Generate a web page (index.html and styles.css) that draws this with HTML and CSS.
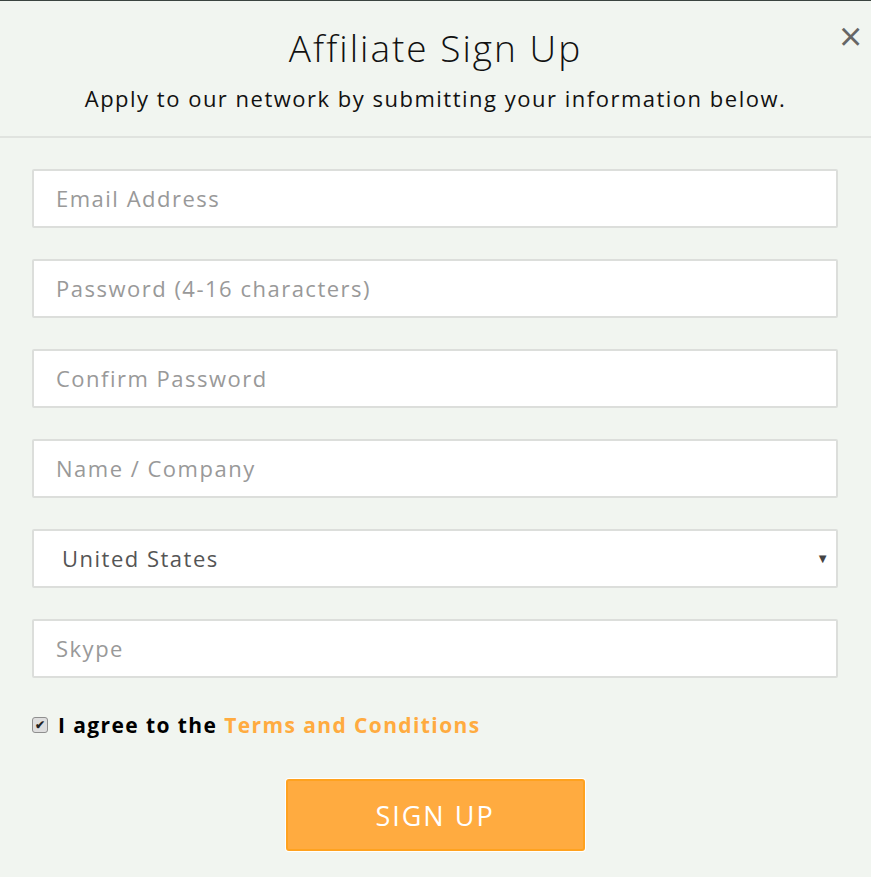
FILE: index.html
```html
<!DOCTYPE html>
<html lang="en">
  <head>
    <title>Affiliate Sign Up</title>
    <meta charset="utf-8" />
    <link rel="stylesheet" href="styles.css">
  </head>
  <body>
    <div class="modal">
      <div class="modal-header">
        <h1>Affiliate Sign Up</h1>
        <p>Apply to our network by submitting your information below.</p>
        <span class="close">&times;</span>
      </div>

      <form class="signup">
        <input class="field" type="email" placeholder="Email Address" />
        <input class="field" type="password" placeholder="Password (4-16 characters)" />
        <input class="field" type="password" placeholder="Confirm Password" />
        <input class="field" type="text" placeholder="Name / Company" />
        <div class="select-wrap">
          <select class="field select">
            <option>United States</option>
            <option>Canada</option>
            <option>United Kingdom</option>
          </select>
          <span class="caret">&#9660;</span>
        </div>
        <input class="field" type="text" placeholder="Skype" />

        <label class="agree">
          <span class="check">&#10004;</span>
          <span>I agree to the <a href="#">Terms and Conditions</a></span>
        </label>

        <button class="submit" type="button">SIGN UP</button>
      </form>
    </div>
  </body>
</html>
```

FILE: styles.css
```css
body {
  margin: 0;
  padding: 0;
  background-color: #f1f5f0;
  color: #111;
  font-family: "Open Sans", sans-serif;
  border-top: 1px solid #3b4440;
}

.modal {
  position: relative;
}

.modal-header {
  text-align: center;
  padding: 24px 0 23px;
  border-bottom: 2px solid #e0e3df;
}

h1 {
  margin: 0;
  font-size: 37px;
  font-weight: 300;
  line-height: 46px;
  letter-spacing: 2px;
  color: #111;
}

.modal-header p {
  margin: 12px 0 0;
  font-size: 22px;
  line-height: 30px;
  letter-spacing: 1.5px;
  color: #111;
}

.close {
  position: absolute;
  top: 13px;
  right: 9px;
  font-size: 40px;
  line-height: 44px;
  color: #666;
  cursor: pointer;
}

.signup {
  display: flex;
  flex-direction: column;
  gap: 31px;
  padding: 31px 33px 30px 32px;
}

.field {
  box-sizing: border-box;
  width: 100%;
  height: 59px;
  margin: 0;
  padding: 0 22px 2px;
  border: 2px solid #dcdedb;
  border-radius: 2px;
  background: #fff;
  font-family: "Open Sans", sans-serif;
  font-size: 22px;
  letter-spacing: 1.5px;
  color: #555;
  outline: none;
}

.field::placeholder {
  color: #999;
}

.select-wrap {
  position: relative;
}

.select {
  appearance: none;
  padding-left: 28px;
  color: #555;
}

.caret {
  position: absolute;
  right: 9px;
  top: 20px;
  font-size: 13px;
  color: #444;
  pointer-events: none;
}

.agree {
  display: flex;
  align-items: center;
  gap: 10px;
  margin-top: 2px;
  font-size: 21px;
  font-weight: 700;
  letter-spacing: 1.4px;
  color: #000;
}

.check {
  box-sizing: border-box;
  width: 16px;
  height: 16px;
  border: 1px solid #8f8f8f;
  border-radius: 3px;
  background: #dedede;
  color: #222;
  font-size: 12px;
  line-height: 14px;
  letter-spacing: 0;
  text-align: center;
}

.agree a {
  color: #ffab40;
  text-decoration: none;
}

.submit {
  align-self: center;
  width: 299px;
  height: 72px;
  margin-top: 9px;
  border: 2px solid #ffa21f;
  border-radius: 3px;
  background: #ffab40;
  box-shadow: 0 0 0 1px #fff;
  color: #fff;
  font-family: "Open Sans", sans-serif;
  font-size: 27px;
  letter-spacing: 2px;
  cursor: pointer;
}
```
